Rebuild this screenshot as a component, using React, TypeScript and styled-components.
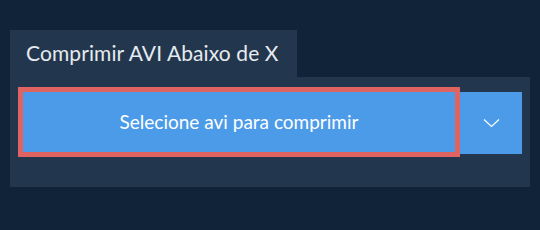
import React from 'react';
import styled, { createGlobalStyle } from 'styled-components';

const GlobalStyle = createGlobalStyle`
  html, body {
    margin: 0;
    padding: 0;
    background: #112338;
    font-family: Lato, "Liberation Sans", sans-serif;
  }
`;

const Page = styled.div`
  padding: 30px 10px 0 10px;
  width: 540px;
  height: 230px;
  box-sizing: border-box;
`;

const Tab = styled.div`
  display: inline-flex;
  align-items: center;
  height: 47px;
  padding: 0 18px 2px 16px;
  box-sizing: border-box;
  background: #22374d;
  color: #e6ebf0;
  font-size: 21px;
  letter-spacing: 0.1px;
`;

const Panel = styled.div`
  background: #22374d;
  padding: 10px 8px 30px 8px;
  display: flex;
  align-items: flex-start;
`;

const MainButton = styled.button`
  width: 442px;
  height: 70px;
  box-sizing: border-box;
  border: 5px solid #df6360;
  background: #4b9be8;
  color: #ffffff;
  font-family: Lato, "Liberation Sans", sans-serif;
  font-size: 19px;
  padding: 0 0 2px 0;
  margin: 0;
  cursor: pointer;
`;

const DropButton = styled.button`
  width: 62px;
  height: 62px;
  margin-top: 5px;
  border: none;
  padding: 0;
  background: #4b9be8;
  display: flex;
  align-items: center;
  justify-content: center;
  cursor: pointer;
`;

const App: React.FC = () => {
  return (
    <>
      <GlobalStyle />
      <Page>
        <Tab>Comprimir AVI Abaixo de X</Tab>
        <Panel>
          <MainButton>Selecione avi para comprimir</MainButton>
          <DropButton aria-label='mais opções'>
            <svg width='17' height='10' viewBox='0 0 17 10'>
              <polyline points='1,1.5 8.5,8.5 16,1.5' fill='none' stroke='#ffffff' strokeWidth='1.2' />
            </svg>
          </DropButton>
        </Panel>
      </Page>
    </>
  );
};

export default App;
